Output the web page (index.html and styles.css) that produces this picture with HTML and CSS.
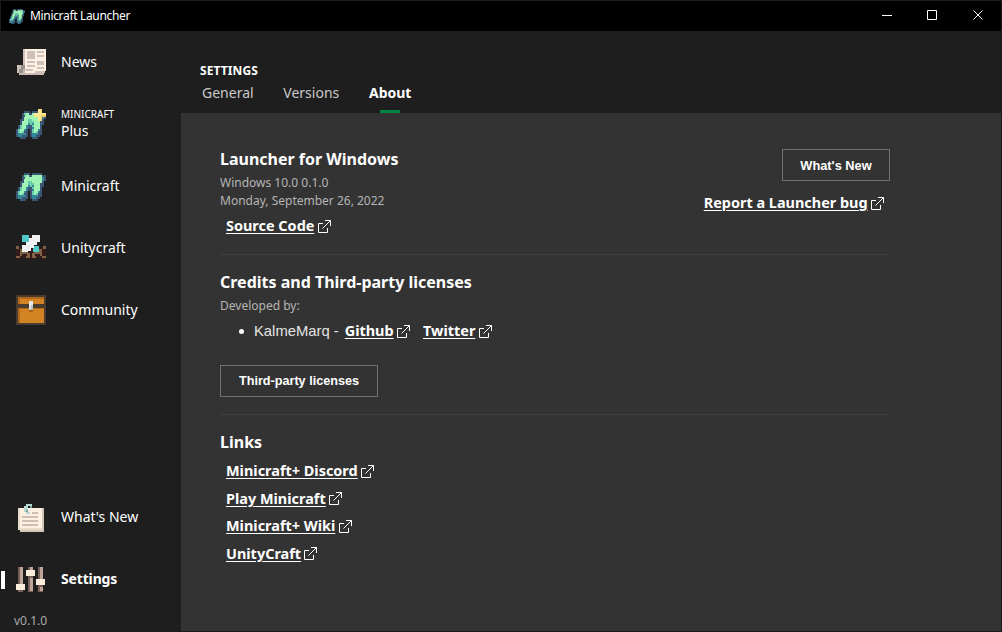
FILE: index.html
```html
<!DOCTYPE html>
<html lang="en">
<head>
<meta charset="utf-8">
<title>Minicraft Launcher</title>
<link rel="stylesheet" href="styles.css">
</head>
<body>
<svg width="0" height="0" class="defs">
  <symbol id="ext" viewBox="0 0 13 13">
    <path d="M5 3.500H.5v9h9V8M7 .5h5.500V6M4.500 8.500l8-8" fill="none" stroke="#fff"/>
  </symbol>
  <symbol id="craft" viewBox="0 0 30 30">
    <g fill="none" stroke-width="2">
      <path stroke="#3b5674" d="M8 3h6M16 3h10M6 5h24M6 7h24M6 9h24M4 11h24M4 13h24M4 15h24M2 17h24M2 19h24M0 21h12M14 21h12M0 23h12M14 23h12M0 25h12M14 25h12M0 27h12M14 27h10M4 29h6M16 29h6"/>
      <path stroke="#a0f5b5" d="M10 5h3M16 5h10M9 7h17M8 9h18M8 11h4M16 11h10M6 13h6M18 13h6M6 15h6M18 15h6M6 17h4M18 17h6M6 19h4M18 19h6M4 21h4M18 21h4M4 23h2M18 23h2"/>
      <path stroke="#68ceab" d="M8 5h2M12 11h4M12 13h6M14 15h2M4 17h2M4 19h2M16 17h2M2 21h2M16 21h2M6 23h2M20 23h2M2 23h2M16 23h2"/>
      <path stroke="#338a9b" d="M26 7h2M26 9h2M12 15h2M16 15h2M10 17h2M10 19h2M16 19h2M8 21h2M22 21h2M4 25h6M18 25h4M2 25h2M16 25h2M2 27h4M16 27h4"/>
    </g>
  </symbol>
</svg>
<div class="window">
  <header class="titlebar">
    <svg class="logo" viewBox="0 0 30 30"><use href="#craft"/></svg>
    <span class="title">Minicraft Launcher</span>
    <svg class="controls" viewBox="0 0 103 12" fill="none" stroke="#fff"><path d="M0 6.500h10M45.500 1.500h9v9h-9z"/><path d="M91.500 1.500l9 9M100.500 1.500l-9 9"/></svg>
  </header>
  <div class="body">
    <nav class="sidebar">
      <a class="item"><svg class="icon" viewBox="0 0 30 30">
        <path fill="#c9bab4" d="M7 2h22v24h-1v2H3v-2H1v-8h6z"/>
        <path fill="#fdf2e1" d="M9 2h21v22h-2v2H9z"/>
        <path fill="#96928a" d="M5 18h4v4H7v4H3v-4h2z"/>
        <path fill="#cfc1ba" d="M7 2h2v16H7zM1 18h4v4H3v4H1zM11 4h8v8h-8zM21 4h7v2h-7zM21 8h7v2h-7zM11 14h8v2h-8zM11 18h8v2h-8zM9 22h8v2H9zM21 14h7v4h-7zM21 20h7v2h-7zM19 24h9v2h-9z"/>
      </svg><span>News</span></a>
      <a class="item"><svg class="icon" viewBox="0 0 30 30"><use href="#craft"/>
        <path fill="#f5c869" d="M22 0h4v4h4v4h-4v4h-4V8h-4V4h4z"/><path fill="#ffe78d" d="M22 0h3v4h5v2h-5v6h-3V8h-4V4h4z"/>
      </svg><span class="stacked"><small>MINICRAFT</small>Plus</span></a>
      <a class="item"><svg class="icon" viewBox="0 0 30 30"><use href="#craft"/></svg><span>Minicraft</span></a>
      <a class="item"><svg class="icon lowered" viewBox="0 0 30 30">
        <path fill="#321b18" d="M0 12h4v2h9v2h4v-2h9v-2h4v14h-4v-2h-8v2h-6v-2H4v2H0z"/>
        <path fill="#806347" d="M0 12h3v3H0zM27 12h3v3h-3zM4 15h8v4h2v3h-3v-2H6v2H4zM18 15h8v7h-2v-2h-5v2h-3v-3h2zM0 22h4v2H0zM26 22h4v2h-4zM10 22h4v2h-4zM16 22h4v2h-4z"/>
        <path fill="#321b18" d="M13 1h3v4h-3zM14 12h4v6h-4z"/>
        <path fill="#50c7cb" d="M6 1h7v7H6zM17 12h6v6h-6z"/>
        <path fill="#f1f1f2" d="M16 1h8v7h-3v3h-3v3h-3v3h-3v1H6v-7h4V8h3V4h3z"/>
      </svg><span>Unitycraft</span></a>
      <a class="item"><svg class="icon" viewBox="0 0 30 30">
        <path fill="#493b2e" d="M0 0h30v30H0z"/><path fill="#b26719" d="M2 2h26v7H2zM2 13h26v15H2z"/><path fill="#d28425" d="M4 4h24v5H4zM4 14h24v14H4z"/>
        <path fill="#a96117" d="M13 15h4v2h-4z"/><path fill="#bdbdbd" d="M13 6h4v9h-4z"/><path fill="#e7e7e7" d="M13 6h4v4h-2v4h-2z"/>
      </svg><span>Community</span></a>
      <div class="spacer"></div>
      <a class="item"><svg class="icon" viewBox="0 0 30 30">
        <path fill="#d2c6b4" d="M2 6h26v24H4v-2H2z"/><path fill="#e9dccb" d="M2 6h24v22H2z"/><path fill="#fdf0e1" d="M4 6h22v20H4z"/>
        <path fill="#cfbdb4" d="M16 10h6v2h-6zM6 14h16v2H6zM6 18h16v2H6zM6 22h16v2H6z"/>
        <path fill="#b7d7d1" d="M10 2h6v2h-4v6h2v2h-4v-2H8V4h2z"/><path fill="#759e9a" d="M14 4h2v2h-2zM10 8h2v2h-2z"/>
      </svg><span>What's New</span></a>
      <a class="item active"><svg class="icon" viewBox="0 0 30 30">
        <path fill="#755f57" d="M2 3h5v25H2zM12 3h5v25h-5zM22 3h5v25h-5z"/><path fill="#bfa598" d="M4 3h3v24H4zM14 3h3v24h-3zM24 3h3v24h-3z"/>
        <path fill="#755f57" d="M2 26h5v2H2zM12 12h5v2h-5zM22 21h5v2h-5z"/>
        <path fill="#faeedb" d="M0 20h9v6H0zM10 6h9v6h-9zM20 15h9v6h-9z"/>
      </svg><span>Settings</span></a>
      <div class="version">v0.1.0</div>
    </nav>
    <main class="main">
      <div class="head">
        <h1>SETTINGS</h1>
        <div class="tabs"><a>General</a><a>Versions</a><a class="selected">About</a></div>
      </div>
      <div class="content">
        <section class="about">
          <div>
            <h2>Launcher for Windows</h2>
            <p>Windows 10.0 0.1.0</p>
            <p>Monday, September 26, 2022</p>
            <a class="link"><u>Source Code</u><svg><use href="#ext"/></svg></a>
          </div>
          <div class="actions">
            <button>What's New</button>
            <a class="link"><u>Report a Launcher bug</u><svg><use href="#ext"/></svg></a>
          </div>
        </section>
        <section class="credits">
          <h2>Credits and Third-party licenses</h2>
          <p>Developed by:</p>
          <div class="dev"><i></i><span>KalmeMarq -</span><a class="link"><u>Github</u><svg><use href="#ext"/></svg></a><a class="link"><u>Twitter</u><svg><use href="#ext"/></svg></a></div>
          <button>Third-party licenses</button>
        </section>
        <section class="links">
          <h2>Links</h2>
          <a class="link"><u>Minicraft+ Discord</u><svg><use href="#ext"/></svg></a>
          <a class="link"><u>Play Minicraft</u><svg><use href="#ext"/></svg></a>
          <a class="link"><u>Minicraft+ Wiki</u><svg><use href="#ext"/></svg></a>
          <a class="link"><u>UnityCraft</u><svg><use href="#ext"/></svg></a>
        </section>
      </div>
    </main>
  </div>
</div>
</body>
</html>
```
FILE: styles.css
```css
* { box-sizing: border-box; }
body { margin: 0; font-family: "Noto Sans", sans-serif; font-size: 14px; color: #fff; }
.defs { display: block; height: 0; }
.window { width: 1002px; height: 632px; border: 1px solid #1b1b1b; background: #1e1e1e; display: flex; flex-direction: column; overflow: hidden; }
.titlebar { height: 30px; flex: none; background: #000; display: flex; align-items: center; padding: 0 16px 0 8px; }
.logo { width: 16px; height: 16px; margin-right: 5px; }
.title { font-size: 12px; line-height: 16px; letter-spacing: -.33px; }
.controls { width: 103px; height: 12px; margin-left: auto; margin-top: -2px; }
.body { flex: 1; display: flex; min-height: 0; }
.sidebar { width: 180px; display: flex; flex-direction: column; }
.item { height: 62px; flex: none; display: flex; align-items: center; padding-left: 15px; line-height: 17px; }
.item span { padding-bottom: 2px; }
.item .stacked { padding-bottom: 4px; }
.icon { width: 30px; height: 30px; margin-right: 15px; shape-rendering: crispEdges; }
.lowered { margin-top: 2px; }
.item small { display: block; font-size: 10px; line-height: 16px; }
.spacer { height: 145px; }
.active { position: relative; font-weight: bold; letter-spacing: -.15px; }
.active::before { content: ""; position: absolute; left: 0; top: 23px; width: 4px; height: 18px; background: #fff; }
.version { font-size: 12px; line-height: 16px; color: #ababab; padding: 3px 0 0 13px; }
.main { flex: 1; display: flex; flex-direction: column; }
.head { height: 82px; flex: none; padding: 31px 0 0 19px; }
h1 { margin: 0; font-size: 12px; line-height: 17px; letter-spacing: .1px; }
.tabs { display: flex; padding-left: 2px; gap: 29.700px; line-height: 20px; color: #c9c9c9; margin-top: 4px; }
.selected { color: #fff; font-weight: bold; height: 30px; display: flex; flex-direction: column; align-items: center; }
.selected::after { content: ""; width: 20px; height: 3px; background: #008542; margin-top: 7px; }
.content { flex: 1; background: #333; padding: 35px 111px 0 39px; }
section { border-bottom: 1px solid #3e3e3e; }
h2 { margin: 0; font-size: 16px; line-height: 22px; }
p { margin: 0; font-size: 12px; line-height: 18px; color: #b5b5b5; }
.link { display: flex; align-items: center; font-size: 14.450px; font-weight: bold; line-height: 20px; padding-left: 6px; }
.link u { text-underline-offset: 2px; text-decoration-thickness: 1px; }
.link svg { width: 13px; height: 13px; margin: 0 0 0 3.400px; }
button { display: block; height: 32px; padding: 0; border: 1px solid #727272; background: transparent; color: #fff; font: bold 12.650px "Liberation Sans", sans-serif; }
.about { height: 107px; display: flex; justify-content: space-between; }
.about p:first-of-type { margin-top: 4px; }
.about > div > .link { margin-top: 6px; }
.actions { display: flex; flex-direction: column; align-items: flex-end; padding-top: 1px; }
.actions button { width: 108px; font-size: 12.800px; }
.about .actions .link { padding-right: 6px; margin-top: 12px; }
.credits { height: 160px; padding-top: 16px; }
.credits p { margin-top: 4px; }
.credits button { width: 158px; margin-top: 24px; }
.dev { display: flex; align-items: center; height: 20px; margin-top: 6px; padding-left: 19px; }
.dev i { width: 5px; height: 5px; border-radius: 50%; background: #fff; margin-right: 10px; }
.dev span { font: 14.800px/20px "Liberation Sans", sans-serif; color: #e4e4e4; }
.dev .link + .link { margin-left: 7px; }
.links { border: 0; padding-top: 16px; }
.links .link { height: 20px; margin-top: 7.500px; }
.links h2 + .link { margin-top: 8px; }
```
